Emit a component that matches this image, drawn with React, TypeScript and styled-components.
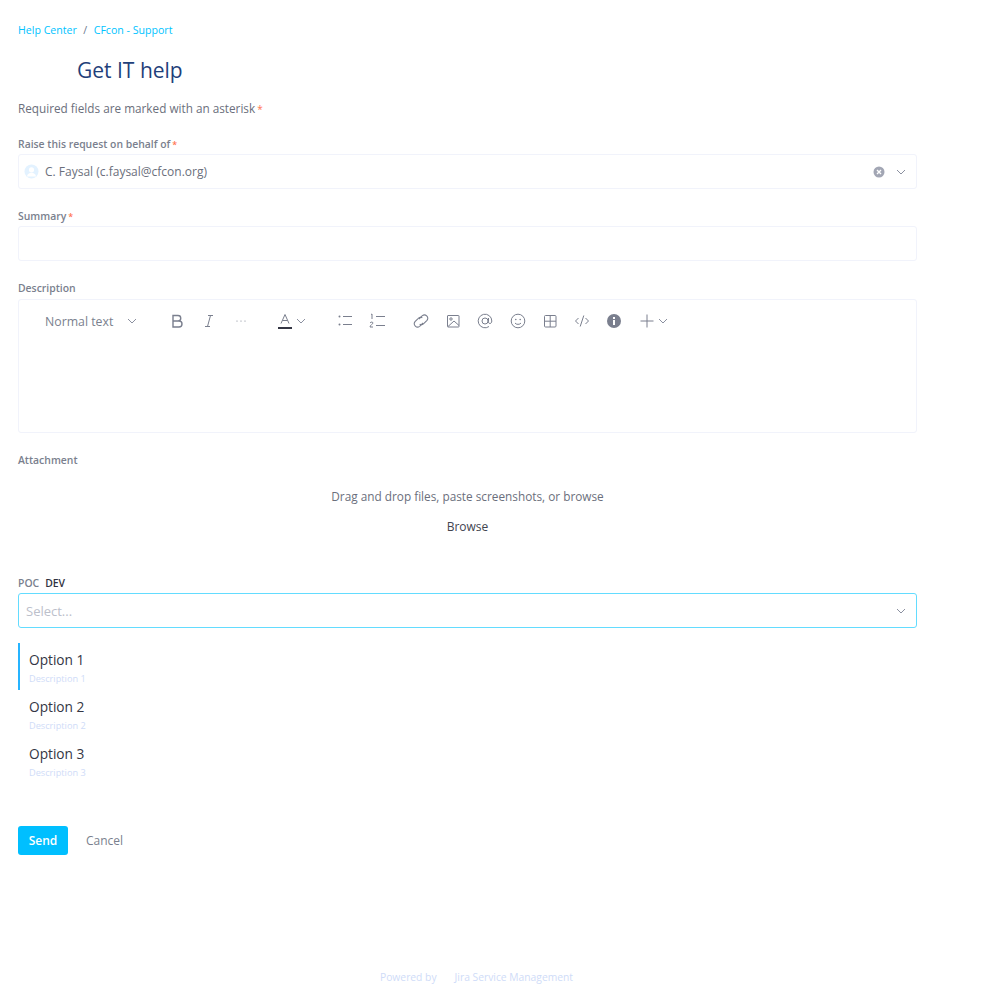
import React from "react";
import styled, { createGlobalStyle } from "styled-components";

const GlobalStyle = createGlobalStyle`
  html, body {
    margin: 0;
    padding: 0;
    background: #fff;
    font-family: "Open Sans", "Noto Sans", sans-serif;
  }
`;

const Page = styled.div`
  width: 987px;
  height: 999px;
  box-sizing: border-box;
  padding: 23px 70px 0 18px;
  display: flex;
  flex-direction: column;
  overflow: hidden;
`;

const Breadcrumbs = styled.nav`
  display: flex;
  gap: 6.5px;
  height: 15px;
  line-height: 15px;
  font-size: 10.6px;
  color: #00c3ff;
  span:nth-child(2) { color: #6b778c; }
`;

const Title = styled.h1`
  margin: 17px 0 0 59px;
  height: 30px;
  line-height: 30px;
  font-size: 21px;
  font-weight: 500;
  color: #1f3f7a;
`;

const Note = styled.p`
  margin: 14px 0 0;
  height: 18px;
  line-height: 18px;
  font-size: 11.75px;
  color: #6b6f7c;
`;

const Star = styled.span`
  color: #ff7452;
  margin-left: 2px;
  font-size: 0.85em;
`;

const Label = styled.label`
  display: block;
  height: 14px;
  line-height: 14px;
  font-size: 10.4px;
  font-weight: 600;
  color: #7a7f8e;
`;

const Field = styled.div<{ $top: number }>`
  margin-top: ${(p) => p.$top}px;
`;

const Input = styled.div<{ $focus?: boolean }>`
  margin-top: 3px;
  height: 35px;
  box-sizing: border-box;
  display: flex;
  align-items: center;
  border: 1px solid ${(p) => (p.$focus ? "#63dcff" : "#f1f3fb")};
  border-radius: 3px;
  font-size: 12px;
  color: #6b6f7c;
`;

const Avatar = styled.svg`
  margin-left: 5px;
  width: 15px;
  height: 15px;
  flex: none;
`;

const Value = styled.span`
  margin-left: 6px;
  flex: 1;
`;

const Placeholder = styled.span`
  margin-left: 7px;
  flex: 1;
  font-size: 13px;
  color: #bcc0cb;
`;

const Chevron = styled.svg<{ $left?: number }>`
  width: 12px;
  height: 12px;
  flex: none;
  margin-left: ${(p) => p.$left ?? 0}px;
  fill: none;
  stroke: #8b90a0;
  stroke-width: 1;
`;

const Trailing = styled.div`
  display: flex;
  align-items: center;
  gap: 10px;
  margin-right: 9px;
`;

const Editor = styled.div`
  margin-top: 4px;
  height: 134px;
  box-sizing: border-box;
  border: 1px solid #f1f3fb;
  border-radius: 3px;
`;

const Toolbar = styled.div`
  display: flex;
  align-items: center;
  height: 42px;
  padding-left: 26px;
`;

const StyleName = styled.span`
  width: 81px;
  font-size: 12.3px;
  color: #7a7f8e;
`;

const Tool = styled.svg<{ $gapLeft?: number }>`
  flex: none;
  width: 16px;
  height: 16px;
  margin-left: ${(p) => p.$gapLeft ?? 16}px;
  fill: none;
  stroke: #7a7f8e;
  stroke-width: 1;
`;

const Drop = styled.div`
  margin-top: 20px;
  height: 56px;
  display: flex;
  flex-direction: column;
  align-items: center;
  font-size: 11.8px;
  color: #6b6f7c;
`;

const DropText = styled.span`
  height: 18px;
  line-height: 18px;
`;

const Browse = styled.span`
  margin-top: 13px;
  height: 18px;
  line-height: 18px;
  font-size: 12px;
  color: #42444f;
`;

const Dev = styled.span`
  margin-left: 6px;
  color: #303240;
`;

const Options = styled.ul`
  list-style: none;
  margin: 15px 0 0;
  padding: 0;
`;

const Option = styled.li<{ $active?: boolean }>`
  height: 47px;
  box-sizing: border-box;
  padding: 8px 0 0 9px;
  border-left: 2px solid ${(p) => (p.$active ? "#26b4ff" : "transparent")};
`;

const OptionName = styled.div`
  height: 18px;
  line-height: 18px;
  font-size: 13.7px;
  color: #343644;
`;

const OptionDesc = styled.div`
  margin-top: 4px;
  height: 12px;
  line-height: 12px;
  font-size: 9.2px;
  color: #cfdcf8;
`;

const Actions = styled.div`
  margin-top: 42px;
  display: flex;
  align-items: center;
`;

const SendButton = styled.button`
  width: 50px;
  height: 29px;
  padding: 0;
  border: 0;
  border-radius: 3px;
  background: #00bfff;
  color: #fff;
  font-family: inherit;
  font-size: 12px;
  font-weight: 600;
`;

const CancelButton = styled.button`
  margin-left: 18px;
  padding: 0;
  border: 0;
  background: none;
  color: #7a7f8e;
  font-family: inherit;
  font-size: 12px;
`;

const Footer = styled.footer`
  margin-top: 115px;
  display: flex;
  justify-content: center;
  gap: 18px;
  padding-left: 18px;
  font-size: 10.3px;
  line-height: 14px;
  color: #cfdcf8;
`;

const Down = ({ left }: { left?: number }) => (
  <Chevron $left={left} viewBox="0 0 12 12">
    <path d="M2 4l4 4 4-4" />
  </Chevron>
);

const Required = () => <Star>*</Star>;

const toolbar = (
  <Toolbar>
    <StyleName>Normal text</StyleName>
    <Down />
    <Tool $gapLeft={31} viewBox="0 0 16 16" style={{ strokeWidth: 1.4 }}>
      <path d="M4 2.5h5a2.7 2.7 0 010 5.5H4zM4 8h6a3 3 0 010 6H4z" />
    </Tool>
    <Tool viewBox="0 0 16 16">
      <path d="M7 2.500h5M4 13.500h5M9.500 2.500l-3 11" />
    </Tool>
    <Tool viewBox="0 0 16 16">
      <circle cx="4" cy="8" r=".6" fill="#7a7f8e" stroke="none" />
      <circle cx="8" cy="8" r=".6" fill="#7a7f8e" stroke="none" />
      <circle cx="12" cy="8" r=".6" fill="#7a7f8e" stroke="none" />
    </Tool>
    <Tool $gapLeft={28} viewBox="0 0 16 16">
      <path d="M4 10.500L8 1.500l4 9M5.500 7.500h5" />
      <path d="M1 15h14" strokeWidth="2" stroke="#343644" />
    </Tool>
    <Down left={2} />
    <Tool $gapLeft={30} viewBox="0 0 16 16">
      <path d="M6 3.500h9M6 11.500h9" />
      <circle cx="2.500" cy="3.500" r="1" fill="#7a7f8e" stroke="none" />
      <circle cx="2.500" cy="11.500" r="1" fill="#7a7f8e" stroke="none" />
    </Tool>
    <Tool viewBox="0 0 16 16">
      <path d="M7 3.500h9M7 12.500h9M2 1.500l1-.5v5M1 10c1-1.500 3-1 3 0 0 1-3 2-3 4h3" />
    </Tool>
    <Tool $gapLeft={28} viewBox="2 2 12 12">
      <path d="M6.500 6.500L9 4a2.500 2.500 0 013.500 3.500L10 10a2.500 2.500 0 01-3 .5" strokeWidth=".8" />
      <path d="M9.500 9.500L7 12a2.500 2.500 0 01-3.500-3.500L6 6a2.500 2.500 0 013-.5" strokeWidth=".8" />
    </Tool>
    <Tool viewBox="0 0 16 16">
      <rect x="2.500" y="2.500" width="11.500" height="11.500" rx=".5" />
      <circle cx="6" cy="6" r="1.200" />
      <path d="M3 13.500l6-5.500 5 4.500" />
    </Tool>
    <Tool viewBox="0 0 16 16">
      <path d="M12 13.500A6.800 6.800 0 1114.800 8c0 3-3.300 3.500-3.300.800V5" />
      <circle cx="8" cy="8" r="3" />
    </Tool>
    <Tool $gapLeft={17} viewBox="0 0 16 16">
      <circle cx="8" cy="8" r="6.800" />
      <circle cx="5.800" cy="6.500" r=".8" fill="#7a7f8e" stroke="none" />
      <circle cx="10.200" cy="6.500" r=".8" fill="#7a7f8e" stroke="none" />
      <path d="M5 10c1 1.800 5 1.800 6 0" />
    </Tool>
    <Tool viewBox="0 0 16 16">
      <rect x="2.500" y="2.500" width="11.500" height="11.500" rx="1" />
      <path d="M8.200 2.500v11.500M2.500 8.200h11.500" />
    </Tool>
    <Tool viewBox="0 0 16 16">
      <path d="M4.500 5L1.500 8l3 3M11.500 5l3 3-3 3M9.800 2.500l-3.600 11" />
    </Tool>
    <Tool viewBox="0 0 16 16">
      <circle cx="8" cy="8" r="7" fill="#7a7f8e" stroke="none" />
      <rect x="7" y="7" width="2" height="5" fill="#fff" stroke="none" />
      <rect x="7" y="4" width="2" height="2" fill="#fff" stroke="none" />
    </Tool>
    <Tool $gapLeft={17} viewBox="0 0 16 16">
      <path d="M8 1.500v13M1.500 8h13" />
    </Tool>
    <Down left={2} />
  </Toolbar>
);

export default function App() {
  return (
    <Page>
      <GlobalStyle />
      <Breadcrumbs>
        <span>Help Center</span>
        <span>/</span>
        <span>CFcon - Support</span>
      </Breadcrumbs>
      <Title>Get IT help</Title>
      <Note>
        Required fields are marked with an asterisk
        <Required />
      </Note>

      <Field $top={20}>
        <Label>
          Raise this request on behalf of
          <Required />
        </Label>
        <Input>
          <Avatar viewBox="0 0 15 15">
            <circle cx="7.500" cy="7.500" r="7" fill="#e3f2ff" />
            <circle cx="7.500" cy="5.800" r="2.600" fill="#fff" />
            <path d="M3 12.500c.5-5 8.500-5 9 0z" fill="#fff" />
          </Avatar>
          <Value>C. Faysal (c.faysal@cfcon.org)</Value>
          <Trailing>
            <svg width="12" height="12" viewBox="0 0 12 12">
              <circle cx="6" cy="6" r="5.500" fill="#a2a6b4" />
              <path d="M4 4l4 4M8 4l-4 4" stroke="#fff" strokeWidth="1.400" />
            </svg>
            <Down />
          </Trailing>
        </Input>
      </Field>

      <Field $top={20}>
        <Label>
          Summary
          <Required />
        </Label>
        <Input />
      </Field>

      <Field $top={20}>
        <Label>Description</Label>
        <Editor>{toolbar}</Editor>
      </Field>

      <Field $top={20}>
        <Label>Attachment</Label>
        <Drop>
          <DropText>Drag and drop files, paste screenshots, or browse</DropText>
          <Browse>Browse</Browse>
        </Drop>
      </Field>

      <Field $top={33}>
        <Label>
          POC<Dev>DEV</Dev>
        </Label>
        <Input $focus>
          <Placeholder>Select...</Placeholder>
          <Trailing>
            <Down />
          </Trailing>
        </Input>
      </Field>

      <Options>
        <Option $active>
          <OptionName>Option 1</OptionName>
          <OptionDesc>Description 1</OptionDesc>
        </Option>
        <Option>
          <OptionName>Option 2</OptionName>
          <OptionDesc>Description 2</OptionDesc>
        </Option>
        <Option>
          <OptionName>Option 3</OptionName>
          <OptionDesc>Description 3</OptionDesc>
        </Option>
      </Options>

      <Actions>
        <SendButton>Send</SendButton>
        <CancelButton>Cancel</CancelButton>
      </Actions>

      <Footer>
        <span>Powered by</span>
        <span>Jira Service Management</span>
      </Footer>
    </Page>
  );
}
